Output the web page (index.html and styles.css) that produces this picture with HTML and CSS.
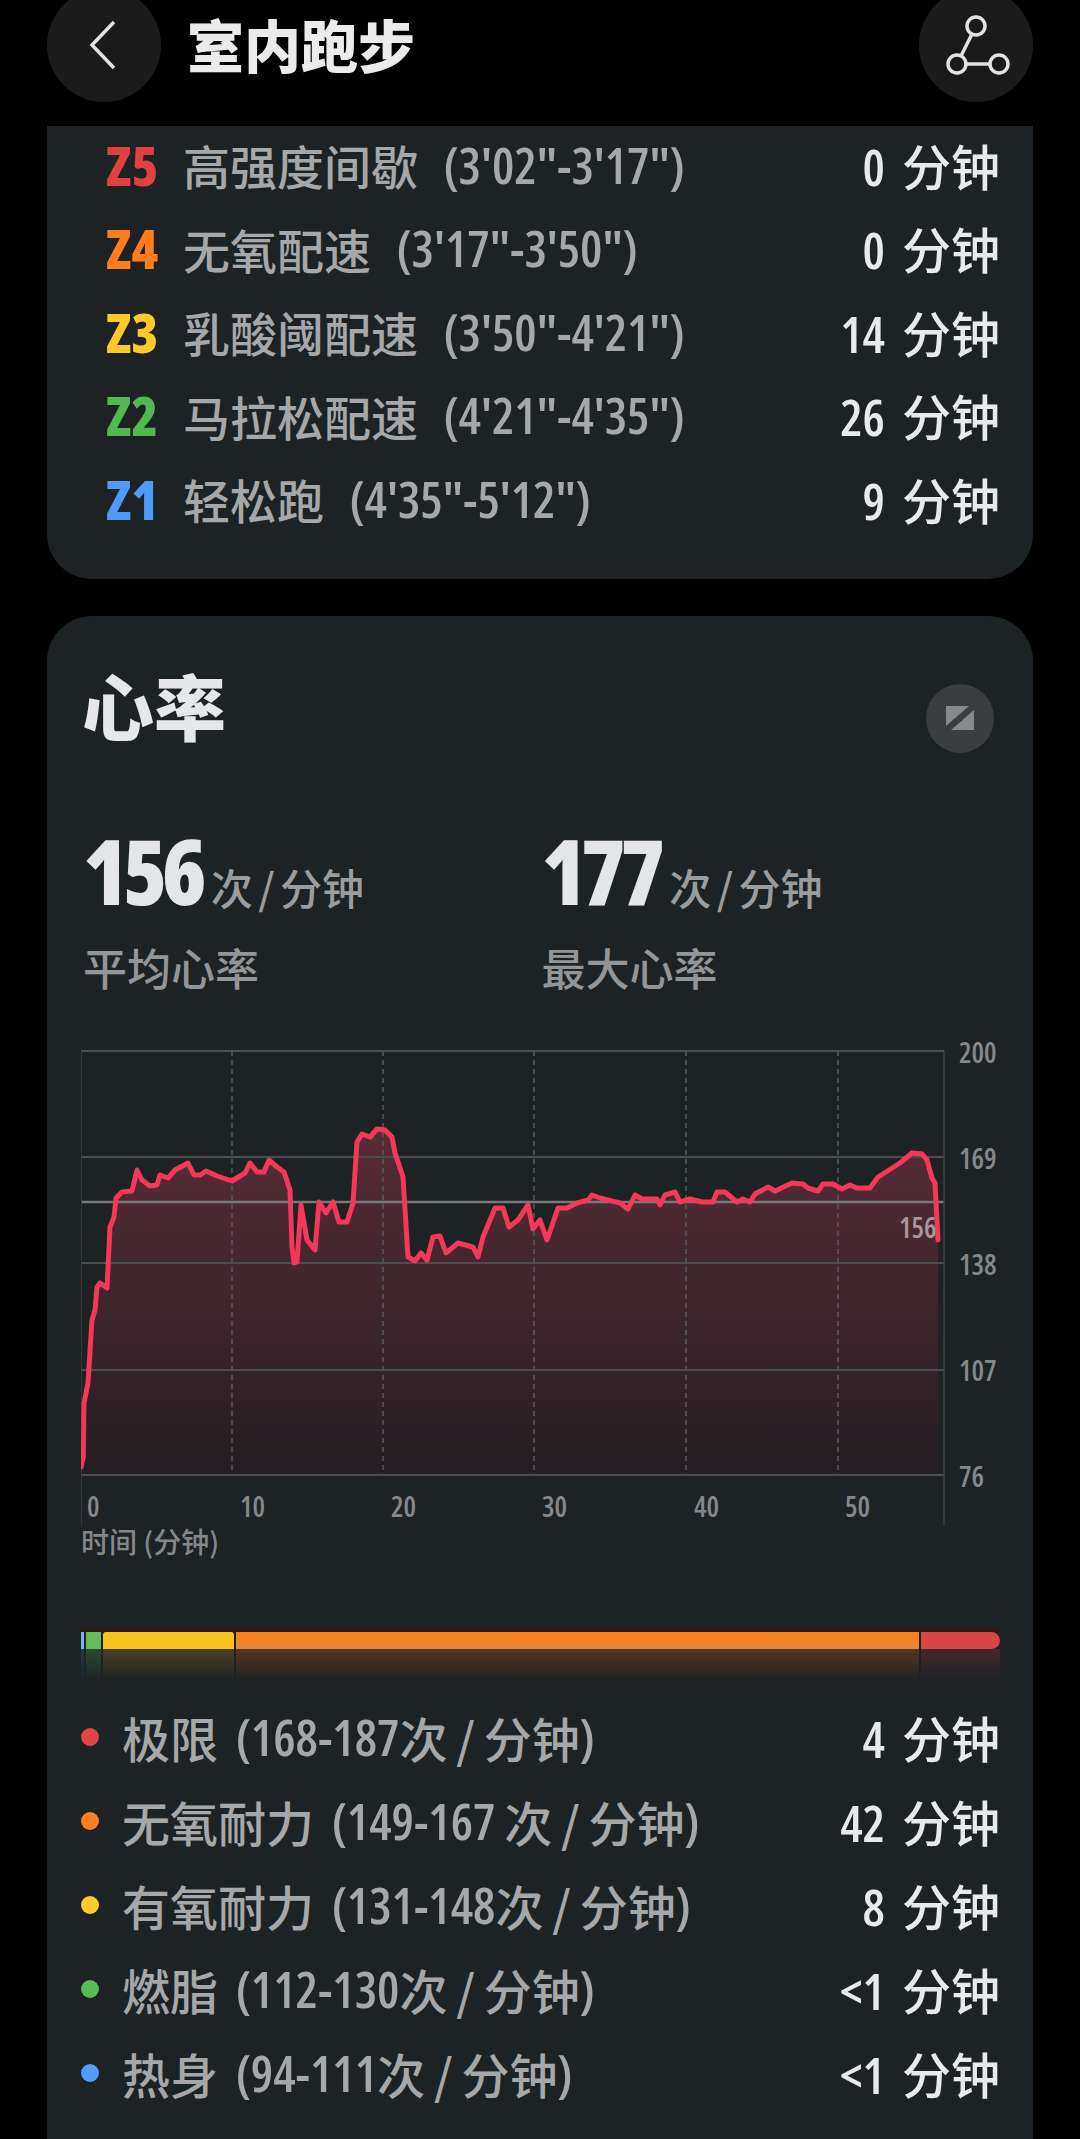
FILE: index.html
```html
<!DOCTYPE html>
<html lang="zh-CN">

<head>
    <meta charset="UTF-8">
    <meta name="viewport" content="width=device-width, initial-scale=1.0">
    <title>室内跑步</title>
    <link rel="stylesheet" href="styles.css">
</head>

<body>

    <!-- top bar, scrolled so the round buttons are cut by the window edge -->
    <header class="topbar">
        <div class="roundBtn">
            <svg width="40" height="60" viewBox="0 0 40 60">
                <path d="M30 7 L8 30 L30 53" class="btnStroke" />
            </svg>
        </div>
        <h1 class="pageTitle">室内跑步</h1>
        <div class="roundBtn">
            <svg width="70" height="60" viewBox="0 0 70 60">
                <circle cx="35" cy="11" r="9" class="btnStroke" />
                <circle cx="16" cy="49" r="9" class="btnStroke" />
                <circle cx="58" cy="49" r="9" class="btnStroke" />
                <path d="M31 19 L20 41 M25 49 L49 49" class="btnStroke" />
            </svg>
        </div>
    </header>

    <!-- pace zones -->
    <section class="card paceCard">
        <div class="row">
            <span class="rowName"><b class="zone red">Z5</b>高强度间歇 <i class="lat">(3'02"-3'17")</i></span>
            <span class="rowVal"><i class="lat">0</i> 分钟</span>
        </div>
        <div class="row">
            <span class="rowName"><b class="zone orange">Z4</b>无氧配速 <i class="lat">(3'17"-3'50")</i></span>
            <span class="rowVal"><i class="lat">0</i> 分钟</span>
        </div>
        <div class="row">
            <span class="rowName"><b class="zone yellow">Z3</b>乳酸阈配速 <i class="lat">(3'50"-4'21")</i></span>
            <span class="rowVal"><i class="lat">14</i> 分钟</span>
        </div>
        <div class="row">
            <span class="rowName"><b class="zone green">Z2</b>马拉松配速 <i class="lat">(4'21"-4'35")</i></span>
            <span class="rowVal"><i class="lat">26</i> 分钟</span>
        </div>
        <div class="row">
            <span class="rowName"><b class="zone blue">Z1</b>轻松跑 <i class="lat">(4'35"-5'12")</i></span>
            <span class="rowVal"><i class="lat">9</i> 分钟</span>
        </div>
    </section>

    <!-- heart rate -->
    <section class="card heartCard">
        <div class="cardHead">
            <h2 class="cardTitle">心率</h2>
            <div class="expandBtn">
                <svg width="28" height="24" viewBox="0 0 28 24">
                    <path d="M0 0 H23 L0 20 Z M28 4 V24 H5 Z" fill="#87898b" />
                </svg>
            </div>
        </div>

        <div class="stats">
            <div class="stat">
                <div class="statTop"><span class="statNum">156</span><span class="statUnit">次 / 分钟</span></div>
                <div class="statName">平均心率</div>
            </div>
            <div class="stat">
                <div class="statTop"><span class="statNum">177</span><span class="statUnit">次 / 分钟</span></div>
                <div class="statName">最大心率</div>
            </div>
        </div>

        <svg class="chart" width="919" height="530" viewBox="81 1030 919 530">
            <defs>
                <linearGradient id="hrFill" x1="0" y1="0" x2="0" y2="1">
                    <stop offset="0" stop-color="#582d37" />
                    <stop offset="1" stop-color="#241e22" />
                </linearGradient>
            </defs>

            <!-- area under the curve -->
            <polygon fill="url(#hrFill)" points="81,1475 81,1467 83.3,1457 84,1403 88,1383 92,1320 95,1310 97,1287 100,1283 107,1288 110,1227 114,1217 116,1198 122,1192 132,1191 137,1170 142,1180 150,1186 157,1185 160,1175 168,1178 175,1170 188,1163 194,1175 200,1175 206,1171 217,1176 232,1181 245,1173 250,1163 257,1172 264,1172 269,1160 277,1167 284,1172 290,1190 292,1247 294,1263 297,1262 301,1205 307,1240 315,1250 319,1202 326,1213 333,1202 339,1222 347,1222 353,1203 357,1142 362,1134 370,1137 377,1129 385,1130 392,1137 395,1153 403,1177 408,1257 415,1261 421,1253 427,1260 433,1237 440,1236 446,1253 458,1243 473,1247 478,1257 483,1237 495,1208 503,1208 509,1227 518,1220 528,1205 533,1229 540,1220 547,1240 558,1208 567,1208 577,1203 588,1200 592,1195 600,1198 620,1203 628,1209 635,1195 642,1199 657,1199 660,1205 665,1195 675,1192 680,1202 690,1199 702,1202 713,1202 717,1192 725,1192 737,1202 743,1199 750,1202 755,1194 768,1187 775,1191 792,1183 803,1184 808,1188 818,1191 823,1184 833,1184 842,1189 850,1185 857,1188 870,1188 878,1177 900,1163 912,1153 922,1154 927,1160 932,1178 935,1183 938,1240 938,1475" />

            <!-- grid -->
            <g class="gridH">
                <line x1="81" y1="1051" x2="944" y2="1051" />
                <line x1="81" y1="1157" x2="944" y2="1157" />
                <line x1="81" y1="1263" x2="944" y2="1263" />
                <line x1="81" y1="1370" x2="944" y2="1370" />
                <line x1="81" y1="1475" x2="944" y2="1475" />
            </g>
            <line class="avgLine" x1="81" y1="1202" x2="944" y2="1202" />
            <g class="gridV">
                <line x1="232" y1="1051" x2="232" y2="1475" />
                <line x1="383" y1="1051" x2="383" y2="1475" />
                <line x1="534" y1="1051" x2="534" y2="1475" />
                <line x1="686" y1="1051" x2="686" y2="1475" />
                <line x1="838" y1="1051" x2="838" y2="1475" />
            </g>
            <g class="gridEdge">
                <line x1="81" y1="1051" x2="81" y2="1525" />
                <line x1="944" y1="1051" x2="944" y2="1525" />
            </g>

            <!-- heart rate curve -->
            <polyline class="hrLine" points="81,1467 83.3,1457 84,1403 88,1383 92,1320 95,1310 97,1287 100,1283 107,1288 110,1227 114,1217 116,1198 122,1192 132,1191 137,1170 142,1180 150,1186 157,1185 160,1175 168,1178 175,1170 188,1163 194,1175 200,1175 206,1171 217,1176 232,1181 245,1173 250,1163 257,1172 264,1172 269,1160 277,1167 284,1172 290,1190 292,1247 294,1263 297,1262 301,1205 307,1240 315,1250 319,1202 326,1213 333,1202 339,1222 347,1222 353,1203 357,1142 362,1134 370,1137 377,1129 385,1130 392,1137 395,1153 403,1177 408,1257 415,1261 421,1253 427,1260 433,1237 440,1236 446,1253 458,1243 473,1247 478,1257 483,1237 495,1208 503,1208 509,1227 518,1220 528,1205 533,1229 540,1220 547,1240 558,1208 567,1208 577,1203 588,1200 592,1195 600,1198 620,1203 628,1209 635,1195 642,1199 657,1199 660,1205 665,1195 675,1192 680,1202 690,1199 702,1202 713,1202 717,1192 725,1192 737,1202 743,1199 750,1202 755,1194 768,1187 775,1191 792,1183 803,1184 808,1188 818,1191 823,1184 833,1184 842,1189 850,1185 857,1188 870,1188 878,1177 900,1163 912,1153 922,1154 927,1160 932,1178 935,1183 938,1240" />

            <!-- axis labels -->
            <g class="axisText">
                <text x="959" y="1063">200</text>
                <text x="959" y="1169">169</text>
                <text x="959" y="1275">138</text>
                <text x="959" y="1381">107</text>
                <text x="959" y="1487">76</text>
                <text x="87" y="1517">0</text>
                <text x="240" y="1517">10</text>
                <text x="391" y="1517">20</text>
                <text x="542" y="1517">30</text>
                <text x="694" y="1517">40</text>
                <text x="845" y="1517">50</text>
                <text x="81" y="1553" class="axisName">时间 (分钟)</text>
            </g>
            <text x="899" y="1238" class="avgText">156</text>
        </svg>

        <!-- time in zone bar, each part fades out below like a reflection -->
        <div class="zoneBar">
            <div class="seg segBlue"></div>
            <div class="seg segGreen"></div>
            <div class="seg segYellow"></div>
            <div class="seg segOrange"></div>
            <div class="seg segRed"></div>
        </div>

        <div class="legend">
            <div class="row legendRow">
                <span class="rowName"><i class="dot red"></i>极限 <i class="lat">(168-187</i>次 / 分钟<i class="lat close">)</i></span>
                <span class="rowVal"><i class="lat">4</i> 分钟</span>
            </div>
            <div class="row legendRow">
                <span class="rowName"><i class="dot orange"></i>无氧耐力 <i class="lat">(149-167</i> 次 / 分钟<i class="lat close">)</i></span>
                <span class="rowVal"><i class="lat">42</i> 分钟</span>
            </div>
            <div class="row legendRow">
                <span class="rowName"><i class="dot yellow"></i>有氧耐力 <i class="lat">(131-148</i>次 / 分钟<i class="lat close">)</i></span>
                <span class="rowVal"><i class="lat">8</i> 分钟</span>
            </div>
            <div class="row legendRow">
                <span class="rowName"><i class="dot green"></i>燃脂 <i class="lat">(112-130</i>次 / 分钟<i class="lat close">)</i></span>
                <span class="rowVal"><i class="lat">&lt;1</i> 分钟</span>
            </div>
            <div class="row legendRow">
                <span class="rowName"><i class="dot blue"></i>热身 <i class="lat">(94-111</i>次 / 分钟<i class="lat close">)</i></span>
                <span class="rowVal"><i class="lat">&lt;1</i> 分钟</span>
            </div>
        </div>
    </section>

</body>

</html>
```

FILE: styles.css
```css
html,
body {
    height: 2139px;
    overflow: hidden;
}

body {
    margin: 0;
    background-color: #000;
    font-family: "Noto Sans CJK SC", sans-serif;
    font-size: 47px;
    font-weight: 500;
    color: #a5a7a9;
}

i {
    font-style: normal;
}

/* top bar */
.topbar {
    display: flex;
    align-items: center;
    height: 114px;
    margin: -12px 47px 24px;
}

.roundBtn {
    flex: none;
    display: flex;
    align-items: center;
    justify-content: center;
    width: 114px;
    height: 114px;
    border-radius: 50%;
    background-color: #1a1a1a;
}

.btnStroke {
    fill: none;
    stroke: #e2e2e2;
    stroke-width: 3.5;
}

.pageTitle {
    flex: 1;
    margin: 0 0 5px 26px;
    font-size: 57px;
    font-weight: 900;
    color: #ebebeb;
}

/* cards */
.card {
    margin: 0 47px;
    background-color: #1d2225;
    padding: 0 33px 0 34px;
}

.paceCard {
    padding-left: 59px;
    padding-bottom: 35px;
    border-radius: 0 0 45px 45px;
}

.heartCard {
    margin-top: 37px;
    padding-top: 68px;
    height: 1600px;
    border-radius: 45px;
}

/* rows used in both lists */
.row {
    display: flex;
    align-items: center;
    justify-content: space-between;
    height: 83.5px;
    padding-bottom: 6px;
    box-sizing: border-box;
}

.legendRow {
    height: 84px;
    font-size: 48px;
    word-spacing: -2px;
}

.rowName {
    display: flex;
    align-items: center;
    white-space: pre;
}

.rowName .lat {
    margin-left: 15px;
}

.legendRow .rowName .lat {
    margin-left: 9px;
}

.legendRow .rowName .close {
    margin-left: 0;
}

.rowVal {
    font-size: 49px;
    word-spacing: 6px;
    color: #e8e9ea;
    white-space: pre;
}

/* narrow digits */
.lat {
    font-family: "Open Sans", sans-serif;
    font-stretch: 75%;
    font-size: 50px;
    font-weight: 600;
}

.zone {
    width: 77px;
    font-family: "Open Sans", sans-serif;
    font-stretch: 75%;
    font-size: 54px;
    font-weight: 800;
}

.dot {
    width: 18px;
    height: 18px;
    margin-right: 23px;
    border-radius: 50%;
}

.dot.red { background-color: #e04545; }
.dot.orange { background-color: #ff7f1e; }
.dot.yellow { background-color: #ffcb2b; }
.dot.green { background-color: #55bb55; }
.dot.blue { background-color: #559dfb; }

.zone.red { color: #e04040; }
.zone.orange { color: #ff7d1c; }
.zone.yellow { color: #ffc92a; }
.zone.green { color: #52b950; }
.zone.blue { color: #4f9bfb; }

/* heart rate header */
.cardHead {
    display: flex;
    align-items: flex-start;
    justify-content: space-between;
    height: 69px;
}

.cardTitle {
    margin: -28px 0 0 1px;
    font-size: 72px;
    line-height: 96px;
    font-weight: 900;
    color: #e6e7e9;
}

.expandBtn {
    display: flex;
    align-items: center;
    justify-content: center;
    width: 68px;
    height: 69px;
    margin-right: 6px;
    border-radius: 50%;
    background-color: #3a3e41;
}

.stats {
    display: flex;
    margin: 72px 0 0 2px;
}

.stat {
    width: 462px;
}

.statTop {
    display: flex;
    align-items: baseline;
    height: 90px;
    line-height: 90px;
}

.statNum {
    font-family: "Open Sans", sans-serif;
    font-stretch: 75%;
    font-size: 90px;
    font-weight: 800;
    letter-spacing: -5px;
    color: #e4e5e9;
}

.statUnit {
    margin-left: 9px;
    font-size: 42px;
    word-spacing: -4px;
    white-space: pre;
    color: #9a9c9e;
}

.statName {
    margin-top: 27px;
    font-size: 44px;
    line-height: 50px;
    color: #939597;
}

/* chart */
.chart {
    display: block;
    margin-top: 38px;
}

.gridH line {
    stroke: #4a4d50;
    stroke-width: 2;
}

.avgLine {
    stroke: #77797c;
    stroke-width: 2.5;
}

.gridV line {
    stroke: #55585b;
    stroke-width: 1.5;
    stroke-dasharray: 5 4;
}

.gridEdge line {
    stroke: #3c4043;
    stroke-width: 1.5;
}

.hrLine {
    fill: none;
    stroke: #f5375a;
    stroke-width: 5;
    stroke-linejoin: round;
    stroke-linecap: round;
}

.axisText text {
    font-family: "Open Sans", sans-serif;
    font-stretch: 75%;
    font-size: 28px;
    font-weight: 600;
    fill: #85888a;
}

.axisText .axisName {
    font-family: "Noto Sans CJK SC", sans-serif;
    font-stretch: normal;
    font-size: 28px;
    font-weight: 500;
}

.avgText {
    font-family: "Open Sans", sans-serif;
    font-stretch: 75%;
    font-size: 28px;
    font-weight: 600;
    fill: #a8989c;
}

/* zone bar */
.zoneBar {
    display: flex;
    gap: 2px;
    height: 49px;
    margin-top: 69px;
    border-top: 3px solid #33150f;
}

.seg {
    height: 100%;
}

.segBlue {
    width: 3px;
    background: linear-gradient(#7ab4ee 0 17px, #263a4c 17px, transparent);
}

.segGreen {
    width: 15px;
    background: linear-gradient(#62bd5a 0 17px, #2c4a30 17px, transparent);
}

.segYellow {
    width: 131px;
    border-radius: 3px 3px 0 0;
    background: linear-gradient(#f9c11d 0 17px, #4b4024 17px, transparent);
}

.segOrange {
    width: 683px;
    background: linear-gradient(#fb8210 0, #e5873a 17px, #553520 17px, transparent);
}

.segRed {
    flex: 1;
    background: linear-gradient(transparent 0 17px, #43282c 17px, transparent);
}

/* red end is round on both corners, so it gets its own box */
.segRed::before {
    content: "";
    display: block;
    height: 17px;
    border-radius: 0 9px 9px 0;
    background-color: #d94444;
}

.legend {
    margin-top: 17px;
}
```
